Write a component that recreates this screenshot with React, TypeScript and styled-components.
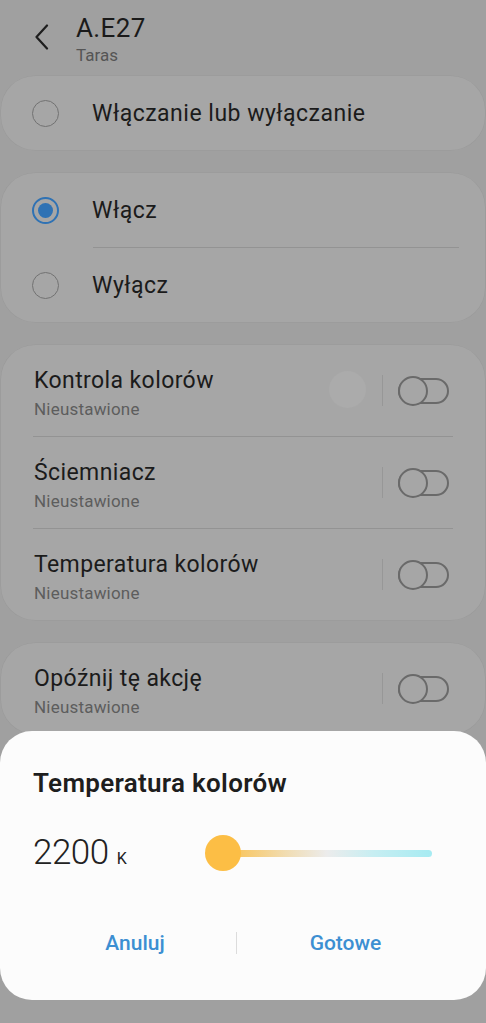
import styled, { createGlobalStyle } from "styled-components";

const GlobalStyle = createGlobalStyle`
  html, body {
    margin: 0;
    padding: 0;
    background: #a0a0a0;
    font-family: Roboto, "Noto Sans", "Liberation Sans", sans-serif;
  }
`;

const rows = [
  { title: "Kontrola kolorów", ripple: true },
  { title: "Ściemniacz" },
  { title: "Temperatura kolorów" },
];

const App = () => {
  return (
    <Page>
      <GlobalStyle />
      <Header>
        <BackButton>
          <svg width="16" height="26" viewBox="0 0 16 26">
            <path d="M13 1.5 L2.5 13 L13 24.5" fill="none" stroke="#1e1e1e" strokeWidth="2.2" strokeLinecap="round" strokeLinejoin="round" />
          </svg>
        </BackButton>
        <HeaderText>
          <DeviceName>A.E27</DeviceName>
          <Room>Taras</Room>
        </HeaderText>
      </Header>

      <Cards>
        <Card>
          <RadioRow>
            <Radio />
            <RadioLabel>Włączanie lub wyłączanie</RadioLabel>
          </RadioRow>
        </Card>

        <Card>
          <RadioRow>
            <Radio checked />
            <RadioLabel>Włącz</RadioLabel>
          </RadioRow>
          <RadioDivider />
          <RadioRow>
            <Radio />
            <RadioLabel>Wyłącz</RadioLabel>
          </RadioRow>
        </Card>

        <Card>
          {rows.map((row, i) => (
            <div key={row.title}>
              {i > 0 && <RowDivider />}
              <SwitchRow>
                <RowText>
                  <RowTitle>{row.title}</RowTitle>
                  <RowSub>Nieustawione</RowSub>
                </RowText>
                {row.ripple && <Ripple />}
                <VLine />
                <Toggle />
              </SwitchRow>
            </div>
          ))}
        </Card>

        <Card>
          <SwitchRow>
            <RowText>
              <RowTitle>Opóźnij tę akcję</RowTitle>
              <RowSub>Nieustawione</RowSub>
            </RowText>
            <VLine />
            <Toggle />
          </SwitchRow>
        </Card>
      </Cards>

      <Dialog>
        <DialogTitle>Temperatura kolorów</DialogTitle>
        <ValueRow>
          <Value>
            2200<Unit>K</Unit>
          </Value>
          <Slider>
            <Track />
            <Thumb />
          </Slider>
        </ValueRow>
        <Actions>
          <ActionButton>Anuluj</ActionButton>
          <ActionDivider />
          <ActionButton>Gotowe</ActionButton>
        </Actions>
      </Dialog>
    </Page>
  );
};

const Page = styled.div`
  position: relative;
  height: 1023px;
  overflow: hidden;
  background: #a0a0a0;
  color: #1b1b1b;
`;

const Header = styled.header`
  display: flex;
  align-items: flex-start;
  height: 76px;
  padding: 0 0 0 34px;
  box-sizing: border-box;
`;

const BackButton = styled.div`
  width: 16px;
  margin-top: 24px;
  display: flex;
`;

const HeaderText = styled.div`
  margin-left: 26px;
  margin-top: 12px;
  display: flex;
  flex-direction: column;
`;

const DeviceName = styled.div`
  font-size: 26px;
  line-height: 32px;
  letter-spacing: 0.4px;
  color: #1a1a1a;
`;

const Room = styled.div`
  margin-top: 1px;
  font-size: 17px;
  line-height: 20px;
  color: #555;
`;

const Cards = styled.div`
  display: flex;
  flex-direction: column;
  gap: 23px;
  padding: 0 1px;
`;

const Card = styled.section`
  background: #a6a6a6;
  border-radius: 34px;
  box-shadow: 0 0 0 0.5px rgba(0, 0, 0, 0.04);
`;

const RadioRow = styled.div`
  display: flex;
  align-items: center;
  height: 74px;
  padding-left: 31px;
`;

const Radio = styled.div<{ checked?: boolean }>`
  width: 27px;
  height: 27px;
  box-sizing: border-box;
  border-radius: 50%;
  border: ${({ checked }) => (checked ? "2px solid #2f72b4" : "1.5px solid #727272")};
  display: flex;
  align-items: center;
  justify-content: center;

  &::after {
    content: "";
    display: ${({ checked }) => (checked ? "block" : "none")};
    width: 15px;
    height: 15px;
    border-radius: 50%;
    background: #2f72b4;
  }
`;

const RadioLabel = styled.span`
  margin-left: 33px;
  font-size: 23px;
  letter-spacing: 0.5px;
  color: #1b1b1b;
`;

const RadioDivider = styled.div`
  height: 1px;
  background: #939393;
  margin: 0 26px 0 92px;
`;

const SwitchRow = styled.div`
  position: relative;
  display: flex;
  align-items: center;
  height: 91px;
  padding: 0 36px 0 33px;
`;

const RowText = styled.div`
  flex: 1;
  display: flex;
  flex-direction: column;
  margin-top: 5px;
`;

const RowTitle = styled.div`
  font-size: 23px;
  line-height: 30px;
  letter-spacing: 0.4px;
  color: #1b1b1b;
`;

const RowSub = styled.div`
  margin-top: 2px;
  font-size: 17px;
  line-height: 22px;
  letter-spacing: 0.2px;
  color: #5d5d5d;
`;

const Ripple = styled.div`
  position: absolute;
  left: 328px;
  top: 26px;
  width: 37px;
  height: 37px;
  border-radius: 50%;
  background: #ababab;
`;

const VLine = styled.div`
  width: 1px;
  height: 31px;
  background: #979797;
  margin-right: 15px;
`;

const Toggle = styled.div`
  position: relative;
  width: 51px;
  height: 26px;
  box-sizing: border-box;
  border: 2px solid #6a6a6a;
  border-radius: 13px;

  &::before {
    content: "";
    position: absolute;
    left: -2px;
    top: -4px;
    width: 30px;
    height: 30px;
    box-sizing: border-box;
    border-radius: 50%;
    border: 2px solid #6a6a6a;
    background: #a6a6a6;
  }
`;

const RowDivider = styled.div`
  height: 1px;
  background: #939393;
  margin: 0 32px;
`;

const Dialog = styled.div`
  position: absolute;
  left: 0;
  right: 0;
  top: 731px;
  height: 269px;
  background: #fcfcfc;
  border-radius: 32px;
  padding: 36px 0 0;
  box-sizing: border-box;
  display: flex;
  flex-direction: column;
`;

const DialogTitle = styled.div`
  padding-left: 33px;
  font-size: 26px;
  line-height: 32px;
  font-weight: 600;
  letter-spacing: 0.3px;
  color: #1e1e1e;
`;

const ValueRow = styled.div`
  display: flex;
  align-items: center;
  margin-top: 28px;
  padding: 0 54px 0 33px;
`;

const Value = styled.div`
  width: 172px;
  padding-top: 6px;
  font-size: 35px;
  font-weight: 300;
  line-height: 40px;
  color: #222;
  letter-spacing: -0.5px;
`;

const Unit = styled.span`
  font-size: 16px;
  font-weight: 400;
  margin-left: 8px;
  letter-spacing: 0;
`;

const Slider = styled.div`
  position: relative;
  flex: 1;
  height: 36px;
  display: flex;
  align-items: center;
`;

const Track = styled.div`
  margin-left: 17px;
  flex: 1;
  height: 7px;
  border-radius: 4px;
  background: linear-gradient(90deg, #fbbf47 0%, #f1dcb0 30%, #ececec 50%, #c7eef2 72%, #a6ebf2 100%);
`;

const Thumb = styled.div`
  position: absolute;
  left: 0;
  top: 0;
  width: 36px;
  height: 36px;
  border-radius: 50%;
  background: #fcbe45;
`;

const Actions = styled.div`
  display: grid;
  grid-template-columns: 202px 1px 1fr;
  align-items: center;
  margin-top: 52px;
  padding: 0 32px 0 34px;
`;

const ActionButton = styled.button`
  border: none;
  background: transparent;
  font-family: inherit;
  font-size: 21px;
  font-weight: 500;
  color: #3c8fd2;
  padding: 0;
  cursor: pointer;
`;

const ActionDivider = styled.div`
  width: 1px;
  height: 22px;
  background: #dcdcdc;
`;

export default App;
